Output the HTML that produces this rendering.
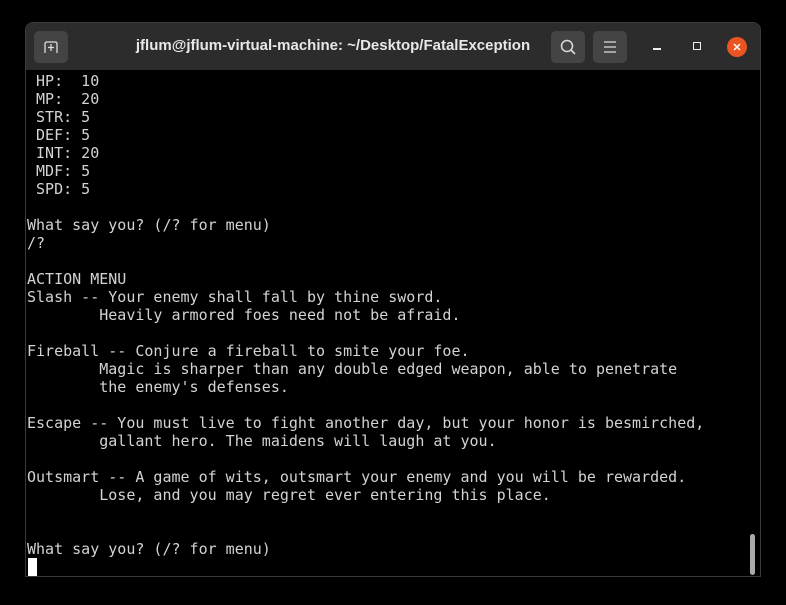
<!DOCTYPE html>
<html><head><style>
html,body{margin:0;padding:0;background:#000;width:786px;height:605px;overflow:hidden}
.win{position:absolute;left:25px;top:22px;width:736px;height:555px;background:#000;border:1px solid #3a3a3a;border-radius:8px 8px 0 0;box-sizing:border-box;overflow:hidden}
.tb{position:absolute;left:0;top:0;width:100%;height:47px;background:#2c2c2c}
.btn{position:absolute;top:8px;width:34px;height:32px;background:#444;border-radius:5px}
.title{position:absolute;left:0;width:614px;top:14px;text-align:center;font:bold 15px "Liberation Sans",sans-serif;color:#e8e8e8;white-space:nowrap}
pre{position:absolute;left:1px;top:49px;margin:0;font:15px/18px "DejaVu Sans Mono","Liberation Mono",monospace;color:#d3d3d3;letter-spacing:0}
.cur{position:absolute;left:2px;top:535px;width:9px;height:18px;background:#fff}
.sb{position:absolute;left:724px;top:511px;width:5px;height:41px;background:#aaa;border-radius:3px}
</style></head><body>
<div class="win">
<div class="tb">
<div class="btn" style="left:8px"><svg width="34" height="32"><path d="M11 22V13q0-2 2-2h8q2 0 2 2v9M17 13v7M14 16.5h6" fill="none" stroke="#ddd" stroke-width="1.3"/></svg></div>
<div class="title">jflum@jflum-virtual-machine: ~/Desktop/FatalException</div>
<div class="btn" style="left:525px"><svg width="34" height="32"><circle cx="16" cy="15" r="5.5" fill="none" stroke="#ddd" stroke-width="1.5"/><path d="M20 19l4 4" stroke="#ddd" stroke-width="1.6"/></svg></div>
<div class="btn" style="left:567px"><svg width="34" height="32"><path d="M11 11h12M11 16h12M11 21h12" stroke="#ddd" stroke-width="1.3"/></svg></div>
<div style="position:absolute;left:627px;top:25px;width:8px;height:1.5px;background:#eee"></div>
<div style="position:absolute;left:667px;top:19px;width:6px;height:6px;border:1.5px solid #eee"></div>
<div style="position:absolute;left:701px;top:14px;width:20px;height:20px;border-radius:50%;background:#e95420"><svg width="20" height="20"><path d="M7 7l6 6M13 7l-6 6" stroke="#fff" stroke-width="1.5"/></svg></div>
</div>
<pre> HP:  10
 MP:  20
 STR: 5
 DEF: 5
 INT: 20
 MDF: 5
 SPD: 5

What say you? (/? for menu)
/?

ACTION MENU
Slash -- Your enemy shall fall by thine sword.
        Heavily armored foes need not be afraid.

Fireball -- Conjure a fireball to smite your foe.
        Magic is sharper than any double edged weapon, able to penetrate
        the enemy's defenses.

Escape -- You must live to fight another day, but your honor is besmirched,
        gallant hero. The maidens will laugh at you.

Outsmart -- A game of wits, outsmart your enemy and you will be rewarded.
        Lose, and you may regret ever entering this place.


What say you? (/? for menu)</pre>
<div class="cur"></div>
<div class="sb"></div>
</div>
</body></html>
